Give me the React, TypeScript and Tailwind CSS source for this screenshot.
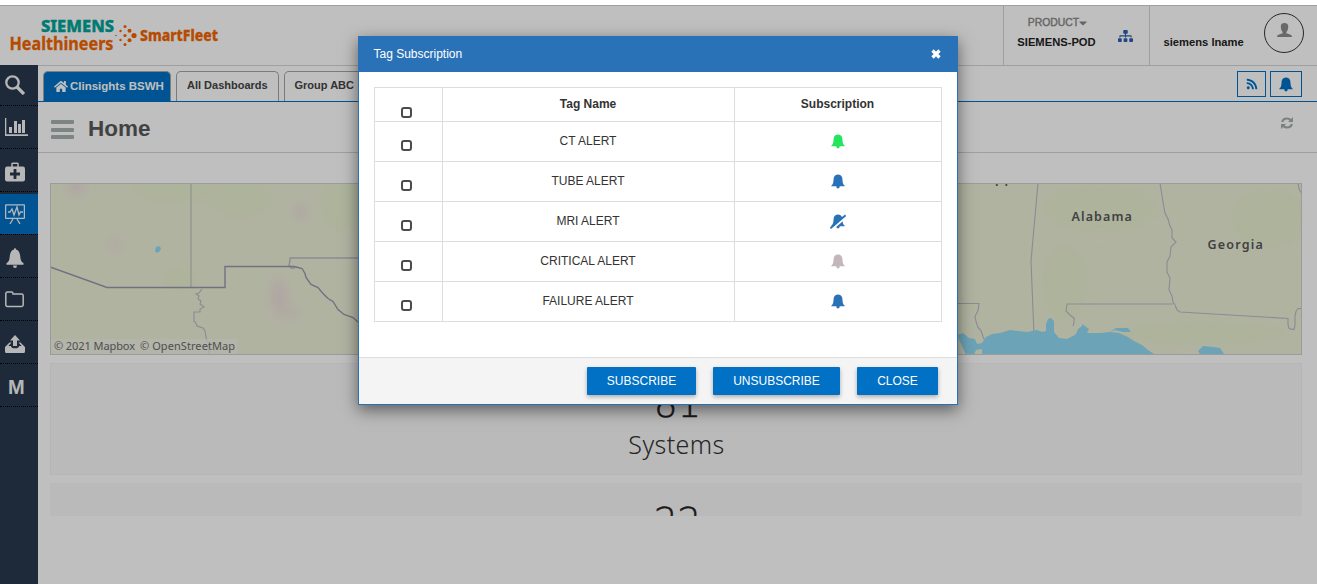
import React from "react";
import { FaHome, FaRss, FaSitemap, FaCaretDown } from "react-icons/fa";

const rows = [
  { name: "CT ALERT", color: "text-[#25e55e]" },
  { name: "TUBE ALERT", color: "text-[#2a72b8]" },
  { name: "MRI ALERT", color: "text-[#2a72b8]", off: true },
  { name: "CRITICAL ALERT", color: "text-[#c3b7ba]" },
  { name: "FAILURE ALERT", color: "text-[#2a72b8]" },
];

function Bell({ className, off }: { className?: string; off?: boolean }) {
  return (
    <svg viewBox="0 0 16 16" className={className} fill="currentColor">
      <path d="M8 .6C9.900.6 11.600 1.600 12.200 3.600l.5 4.300c.2 1.700 1 2.800 2 3.800v.6H9.700C9.700 13.600 9 14.400 8 14.400S6.300 13.600 6.300 12.300H1.300v-.6c1-1 1.800-2.100 2-3.800L3.800 3.600C4.400 1.600 6.100.6 8 .6z" />
      {off && <path d="M1 16 17 2.200" stroke="white" strokeWidth="2.200" />}
      {off && <path d="M.4 14.300 15.600 1.200" stroke="currentColor" strokeWidth="1.900" />}
    </svg>
  );
}

function Check() {
  return <span className="block h-[11px] w-[11px] rounded-[3px] border-2 border-[#4c4c4c] bg-white" />;
}

const sideIcons: React.ReactNode[] = [
  <svg key="search" viewBox="0 0 20 20" className="h-5 w-5" fill="none" stroke="currentColor">
    <circle cx="7.500" cy="7.500" r="6.200" strokeWidth="2.300" />
    <path d="M12 12l7 7" strokeWidth="3.300" />
  </svg>,
  <svg key="chart" viewBox="0 0 23 18" className="h-[18px] w-[23px]" fill="currentColor">
    <path d="M0 0h1.300v16.300H23V18H0zM4 9h3v6H4zM9 3h3v12H9zM13 6h3v9h-3zM17 2h3v13h-3z" />
  </svg>,
  <svg key="kit" viewBox="0 0 20 20" className="mt-[3px] h-5 w-5">
    <path d="M7 5V1.800Q7 1.200 8 1.200h4q1 0 1 .6V5" fill="none" stroke="currentColor" strokeWidth="1.500" />
    <rect y="4.500" width="20" height="15" rx="2.200" fill="currentColor" />
    <path d="M10 7v10M5 12h10" stroke="#28394d" strokeWidth="2.800" />
  </svg>,
  <svg key="board" viewBox="0 0 20 20" className="mt-0.5 h-5 w-5" fill="none" stroke="currentColor" strokeWidth="1.300">
    <rect x=".6" y=".8" width="18.800" height="13.500" rx=".5" />
    <path d="M3 8h2l2-3 2 6 3-8 2 8 1.500-3H18M8 15l-3 5M12 15l3 5" />
  </svg>,
  <svg key="bell" viewBox="0 0 20 20" className="mt-[3px] h-5 w-5" fill="currentColor">
    <path d="M9 1.500Q9 0 10 0t1 1.500c3 .8 4 3.500 4.300 7.500.3 3.500 1.200 5 3.200 6v1.700h-17V15c2-1 2.900-2.500 3.200-6C5 5 6 2.300 9 1.500zM8 17.500h4Q12 20 10 20t-2-2.500z" />
  </svg>,
  <svg key="folder" viewBox="0 0 20 17" className="h-[17px] w-5" fill="none" stroke="currentColor" strokeWidth="1.500">
    <path d="M2.500 1h4Q8 1 8 2.500V3h8.500q1.700 0 1.700 1.700v9q0 1.700-1.700 1.700h-14Q.8 15.400.8 13.700V2.700Q.8 1 2.500 1z" />
  </svg>,
  <svg key="upload" viewBox="0 0 20 18" className="mt-[3px] h-[18px] w-5" fill="currentColor">
    <path d="M10 0l5 5.500h-3V11H8V5.500H5zM4.500 7.500h2L3.300 11h2.500q.5 2.300 4.200 2.300t4.200-2.300h2.500l-3.200-3.500h2L20 12v4.500q0 1.500-1.500 1.500h-17Q0 18 0 16.500V12z" />
  </svg>,
  <span key="m" className="pt-[3px] pl-[3px] text-[20px] leading-5 font-bold">M</span>,
];

function Logo() {
  return (
    <svg viewBox="0 0 230 44" className="h-11 w-[230px]" fontFamily="'Noto Sans', sans-serif">
      <text x="41" y="16.500" fontSize="16.500" fontWeight="800" fill="#00a599" stroke="#00a599" strokeWidth=".4" textLength="73" lengthAdjust="spacingAndGlyphs">SIEMENS</text>
      <text x="9.500" y="34.500" fontSize="18" fontWeight="700" fill="#f36500" stroke="#f36500" strokeWidth=".3" textLength="104" lengthAdjust="spacingAndGlyphs">Healthineers</text>
      <g fill="#f36500">
        <circle cx="134" cy="20.500" r="2.600" />
        <circle cx="129.500" cy="15.800" r="2" /><circle cx="129.500" cy="25.200" r="2" />
        <circle cx="125" cy="11.500" r="1.500" /><circle cx="125" cy="20.500" r="1.600" /><circle cx="125" cy="29.500" r="1.500" />
        <circle cx="120.500" cy="16" r="1.200" /><circle cx="120.500" cy="25" r="1.200" />
        <circle cx="116" cy="20.500" r=".8" />
      </g>
      <text x="140" y="25.500" fontSize="15.500" fontWeight="800" fill="#f36500" stroke="#f36500" strokeWidth=".3" textLength="78" lengthAdjust="spacingAndGlyphs">SmartFleet</text>
    </svg>
  );
}

function MapView() {
  return (
    <svg viewBox="0 0 1252 172" className="block h-[172px] w-[1252px]" fontFamily="'Noto Sans', sans-serif">
      <defs>
        <filter id="soft"><feGaussianBlur stdDeviation="5" /></filter>
        <clipPath id="frame"><rect width="1252" height="172" /></clipPath>
      </defs>
      <rect width="1252" height="172" fill="#ecefd7" />
      <g filter="url(#soft)" fill="#e8efcf" opacity=".8" clipPath="url(#frame)">
        <ellipse cx="125" cy="5" rx="45" ry="16" /><ellipse cx="190" cy="15" rx="34" ry="22" /><ellipse cx="290" cy="20" rx="20" ry="30" />
        <ellipse cx="130" cy="95" rx="20" ry="12" /><ellipse cx="1050" cy="25" rx="60" ry="25" /><ellipse cx="1015" cy="100" rx="24" ry="40" />
        <ellipse cx="1150" cy="150" rx="90" ry="12" /><ellipse cx="1220" cy="35" rx="40" ry="30" />
      </g>
      <g filter="url(#soft)" fill="#ead8dd" opacity=".7">
        <ellipse cx="26" cy="4" rx="9" ry="9" /><ellipse cx="251" cy="29" rx="7" ry="8" />
        <ellipse cx="229" cy="113" rx="9" ry="17" /><ellipse cx="65" cy="62" rx="8" ry="9" opacity=".5" />
        <ellipse cx="238" cy="130" rx="14" ry="8" opacity=".5" />
      </g>
      <path d="M106 64l3-1 2 2-1 3-3 2-2-2z" fill="#91daf5" />
      <g fill="none" stroke="#bbb9c7" strokeWidth="1.100">
        <path d="M141 0v105" strokeWidth="1.500" stroke="#c9cbc2" />
        <path d="M152 106l-3 4-3 1 3 2-1 3 3 2-1 3 4 3-4 2v3h-6v9l2 2 1 3 6 2 2 3 1 6 1 4 3 2-2 4 1 6-1 6" />
        <path d="M308 75h-68v3l-1 4 2 3 4 0" strokeWidth="1.400" />
        <path d="M988 0l-7 78 3 74M908 120.500h21l-1 7-3 6 1 5 2 6 3 3 2 6 3 7M1110 0l3 19 2 11 3 6 2 7 2 4 0 8 4 4-5 5-1 9-3 6 0 10 3 6-1 12 3 6 1 6 2 3 2 5 3 2 108 6.500 0 6 1 4 5 1 1-4 0-10 1-4 2-3h5M1123 121h-106l-1 7 4 4 4 3 0 5-1 3M1248 0l1 6 3 5" />
      </g>
      <path d="M0 84l57 20.500h118V83.500h69l4 1 4 1 3 5 1 4 5 7 7 3 5 6 5 5 5 3 5 8 6 5 9 3 9 8" fill="none" stroke="#9a96ad" strokeWidth="1.400" />
      <path d="M907 152l6-2 6 5 6 1 2 5 5-1 4-6 6-3 8-1 10-3 8 1 10 1 8-2 4 1 2 1 4-1V141l2-5 3-1 3 3v11l5 6 8 1 6-3 3-2 2-5 4-3V141l7 5-2 4h14l8-1 10 1 9 4 6 4 8 4 6 5 6 4H932v-5l-6 1-2 5h-8zM1150 171l-2-3 5-5 10 1 7 1 4 6zM1060 149l6-4h12l3 4-8 0-8-2z" fill="#91daf5" />
      <g fontWeight="600" fontSize="12.500" fill="#575758" letterSpacing="1.600">
        <text x="1021.500" y="37.500" textLength="62">Alabama</text>
        <text x="1157.500" y="66" textLength="57">Georgia</text>
        <text x="945" y="-.5">pp</text>
      </g>
      <rect x="1" y="156" width="186" height="15" fill="#f1f1e8" opacity=".7" />
      <g fontSize="11" fill="#6a6a6a">
        <text x="4" y="167" textLength="81">© 2021 Mapbox</text>
        <text x="90" y="167" textLength="95">© OpenStreetMap</text>
      </g>
      <rect x=".5" y=".5" width="1251" height="171" fill="none" stroke="#cfcfcf" />
    </svg>
  );
}

function Page() {
  return (
    <div className="flex h-[579px] flex-col bg-white">
      <header className="flex h-[61px] shrink-0 border-y border-[#d5d5d5]">
        <div className="flex-1 pt-[9px]"><Logo /></div>
        <div className="flex w-[146px] border-l border-[#d5d5d5] pl-[13px] text-[#222]">
          <div className="w-[79px] pt-2 text-center">
            <div className="flex items-center justify-center pt-px pl-0.5 text-[10.400px] leading-[15px] font-normal text-[#888]"><span className="[-webkit-text-stroke:0.4px]">PRODUCT</span><FaCaretDown className="h-[12px] w-[8px]" preserveAspectRatio="none" /></div>
            <div className="pt-[5px] text-[11.200px] leading-[14px] font-bold whitespace-nowrap">SIEMENS-POD</div>
          </div>
          <FaSitemap className="mt-6 ml-[22px] h-3 w-[15px] text-[#2b5fae]" />
        </div>
        <div className="flex w-[168px] border-l border-[#d5d5d5] pl-[13px] text-[#222]">
          <div className="w-[101px] pt-[29px] pl-[0.500px] text-[11.200px] leading-[14px] font-bold whitespace-nowrap">siemens lname</div>
          <div className="mt-[7px] flex h-10 w-10 justify-center rounded-full border border-[#333] pt-[9px]">
            <svg viewBox="0 0 16 16" className="h-[15px] w-[15px]" fill="#8c8c8c"><path d="M8 0q4 0 4 4 0 3.500-2 5.500v1.500l4.500 1.500q1.500.5 1.500 2.500H0q0-2 1.500-2.500L6 11V9.500Q4 7.500 4 4q0-4 4-4z" /></svg>
          </div>
        </div>
      </header>
      <div className="flex min-h-0 flex-1">
        <nav className="-mt-px flex w-[38px] shrink-0 flex-col bg-[#28394d] text-[#f4f4f4]">
          {sideIcons.map((icon, i) => (
            <div key={i} className={i === 0 ? "flex h-[41px] items-center border-b border-dotted border-black pl-[5px]" : i === 3 ? "flex h-[43px] items-center border-b border-dotted border-black bg-[linear-gradient(#28394d_2px,#0071c5_2px)] pl-[5px]" : "flex h-[43px] items-center border-b border-dotted border-black pl-[5px]"}>{icon}</div>
          ))}
        </nav>
        <main className="min-w-0 flex-1">
          <div className="flex h-9 items-end border-b border-[#0071c5] pl-[5px] text-[11px] font-bold text-[#444]">
            <div className="flex h-[30px] w-[128px] items-center gap-[2px] rounded-t-[5px] border border-b-0 border-[#aaa] bg-[#0071c5] pt-px pl-[10px] text-[11.500px] whitespace-nowrap text-white"><FaHome className="mb-0.5 h-[13px] w-[14px] shrink-0" />Clinsights BSWH</div>
            <div className="ml-[5px] h-[30px] w-[103px] rounded-t-[5px] border border-b-0 border-[#a5a5a5] pt-[5px] pl-[10px] leading-[17px] whitespace-nowrap">All Dashboards</div>
            <div className="ml-[5px] h-[30px] w-[103px] rounded-t-[5px] border border-b-0 border-[#a5a5a5] pt-[5px] pl-[9.500px] leading-[17px] whitespace-nowrap">Group ABC</div>
            <div className="mr-[15px] mb-[4px] ml-auto flex gap-1 text-[#0071c5]">
              <div className="flex h-[26px] w-[29px] items-center justify-center border border-[#0071c5]"><FaRss className="mb-px h-[12px] w-[12px]" /></div>
              <div className="flex h-[26px] w-8 items-center justify-center border border-[#0071c5]"><Bell className="mt-px h-4 w-4" /></div>
            </div>
          </div>
          <div className="flex h-[51px] items-center border-b border-[#d5d5d5] pl-[13px]">
            <div className="mt-[5px] flex flex-col gap-[3.500px]">
              <span className="h-1 w-[23px] rounded-[1px] bg-[#a6b2b1]" /><span className="h-1 w-[23px] rounded-[1px] bg-[#a6b2b1]" /><span className="h-1 w-[23px] rounded-[1px] bg-[#a6b2b1]" />
            </div>
            <h1 className="mt-1 ml-[14px] text-[22.500px] leading-none font-bold text-[#595959]">Home</h1>
            <svg viewBox="0 0 12 12" className="mr-6 mb-2 ml-auto h-3 w-3" fill="none" stroke="#a4acab" strokeWidth="2.200"><path d="M1.200 5Q2 1.500 6 1.500q2.300 0 3.800 1.800M10.800 7q-.8 3.500-4.800 3.500-2.300 0-3.800-1.800" /><path d="M12 0v5H7zM0 12V7h5z" fill="#a4acab" stroke="none" /></svg>
          </div>
          <div className="pt-[30px] pl-3">
            <MapView />
            <section className="mt-2 flex h-[112px] w-[1252px] flex-col items-center border border-[#f3f3f3] bg-[#f8f8f8] pt-[22px] text-[#333]">
              <div className="pl-[3px] font-['DejaVu_Sans'] text-[37px] leading-[37px] font-extralight text-[#222] [-webkit-text-stroke:0.5px]">81</div>
              <div className="pt-[6px] pl-px font-['Noto_Sans'] text-[25px] leading-[30px] font-light tracking-[0.400px]">Systems</div>
            </section>
            <section className="mt-2 flex h-[33px] w-[1252px] justify-center overflow-hidden bg-[#f8f8f8] pt-[20px] pl-[3px] font-['DejaVu_Sans'] text-[37px] leading-[37px] font-extralight text-[#222] [-webkit-text-stroke:0.5px]">22</section>
          </div>
        </main>
      </div>
    </div>
  );
}

export default function App() {
  return (
    <div className="relative h-[584px] w-[1317px] overflow-hidden bg-white pt-[5px] font-['Liberation_Sans',sans-serif]">
      <Page />
      <div className="absolute inset-x-0 top-[5px] bottom-0 bg-black/25" />
      <div role="dialog" className="absolute top-9 left-[358px] flex h-[369px] w-[600px] flex-col border border-[#2a72b8] bg-white text-xs text-[#333] shadow-[0_5px_15px_rgba(0,0,0,0.5)]">
        <div className="flex h-[35px] shrink-0 items-center justify-between bg-[#2a72b8] pr-4 pl-[14.500px] text-white">
          <span className="pb-0.5">Tag Subscription</span>
          <svg viewBox="0 0 10 10" className="mb-px h-[10px] w-[10px]"><path d="M1.500 1.500l7 7m0-7l-7 7" stroke="white" strokeWidth="3.200" /></svg>
        </div>
        <div className="flex-1 px-[15px] pt-[15px]">
          <table className="w-[568px] table-fixed border-collapse text-center [&_td]:border [&_td]:border-[#ddd] [&_td]:p-0 [&_th]:border [&_th]:border-[#ddd] [&_th]:p-0">
            <colgroup><col className="w-[68px]" /><col className="w-[292px]" /><col className="w-[207px]" /></colgroup>
            <thead>
              <tr className="h-[34px]"><th><div className="flex justify-center pt-[15px] pr-[3.500px]"><Check /></div></th><th><div className="pr-px pb-0.5">Tag Name</div></th><th><div className="pr-px pb-0.5">Subscription</div></th></tr>
            </thead>
            <tbody>
              {rows.map((r) => (
                <tr key={r.name} className="h-10">
                  <td><div className="flex justify-center pt-2 pr-[3.500px]"><Check /></div></td>
                  <td><div className="pr-px pb-px">{r.name}</div></td>
                  <td><div className={r.color}><div className="pr-px"><Bell off={r.off} className="mx-auto block h-4 w-4 overflow-visible" /></div></div></td>
                </tr>
              ))}
            </tbody>
          </table>
        </div>
        <div className="flex h-[47px] shrink-0 gap-[17px] border-t border-[#ddd] bg-[#f4f4f4] pt-[9px] pl-[228px] text-white">
          <button className="h-7 w-[109px] rounded-[1px] bg-[#0071c5] shadow-[0_2px_4px_rgba(0,0,0,0.3)]">SUBSCRIBE</button>
          <button className="h-7 w-[127px] rounded-[1px] bg-[#0071c5] shadow-[0_2px_4px_rgba(0,0,0,0.3)]">UNSUBSCRIBE</button>
          <button className="h-7 w-[81px] rounded-[1px] bg-[#0071c5] shadow-[0_2px_4px_rgba(0,0,0,0.3)]">CLOSE</button>
        </div>
      </div>
    </div>
  );
}
